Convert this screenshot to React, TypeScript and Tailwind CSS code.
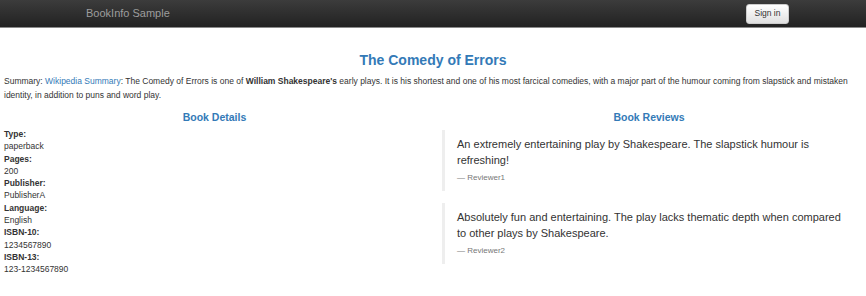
import React from "react";

const details: [string, string][] = [
  ["Type:", "paperback"],
  ["Pages:", "200"],
  ["Publisher:", "PublisherA"],
  ["Language:", "English"],
  ["ISBN-10:", "1234567890"],
  ["ISBN-13:", "123-1234567890"],
];

const reviews = [
  {
    text: "An extremely entertaining play by Shakespeare. The slapstick humour is refreshing!",
    who: "Reviewer1",
  },
  {
    text: "Absolutely fun and entertaining. The play lacks thematic depth when compared to other plays by Shakespeare.",
    who: "Reviewer2",
  },
];

export default function App() {
  return (
    <div className="w-[866px] h-[296px] bg-white text-[#333] font-['Liberation_Sans',Arial,sans-serif] overflow-hidden">
      <nav className="h-[28px] bg-gradient-to-b from-[#3c3c3c] to-[#222222] border-b border-[#8a8a8a] flex items-center justify-between pl-[86px] pr-[77px]">
        <span className="text-[11px] text-[#9d9d9d]">BookInfo Sample</span>
        <button className="h-[20px] w-[43px] rounded-[3px] border border-[#ccc] bg-gradient-to-b from-white to-[#e0e0e0] text-[8.5px] text-[#333] flex items-center justify-center">
          Sign in
        </button>
      </nav>
      <div className="px-[4px]">
        <h3 className="mt-[24px] text-center text-[14px] leading-[16px] font-bold text-[#337ab7]">
          The Comedy of Errors
        </h3>
        <p className="mt-[6px] text-[8.5px] leading-[14px]">
          Summary: <a className="text-[#337ab7]">Wikipedia Summary</a>: The Comedy of Errors is one of{" "}
          <b>William Shakespeare's</b> early plays. It is his shortest and one of his most farcical comedies, with a
          major part of the humour coming from slapstick and mistaken identity, in addition to puns and word play.
        </p>
        <div className="mt-[9px] grid grid-cols-2">
          <div>
            <h4 className="text-center text-[10.5px] leading-[13px] font-bold text-[#337ab7] pr-[8px]">Book Details</h4>
            <dl className="mt-[4px] text-[8.5px] leading-[12.3px]">
              {details.map(([k, v]) => (
                <React.Fragment key={k}>
                  <dt className="font-bold">{k}</dt>
                  <dd>{v}</dd>
                </React.Fragment>
              ))}
            </dl>
          </div>
          <div className="pl-[9px] pr-[6px]">
            <h4 className="text-center text-[10.5px] leading-[13px] font-bold text-[#337ab7]">Book Reviews</h4>
            <div className="mt-[6px] flex flex-col gap-[12px]">
              {reviews.map((r) => (
                <blockquote key={r.who} className="border-l-[3px] border-[#eeeeee] pl-[12px] pr-[8px] pt-[6px] pb-[8px]">
                  <p className="text-[11px] leading-[16px]">{r.text}</p>
                  <small className="block mt-[4px] text-[8px] leading-[11px] text-[#777]">— {r.who}</small>
                </blockquote>
              ))}
            </div>
          </div>
        </div>
      </div>
    </div>
  );
}
